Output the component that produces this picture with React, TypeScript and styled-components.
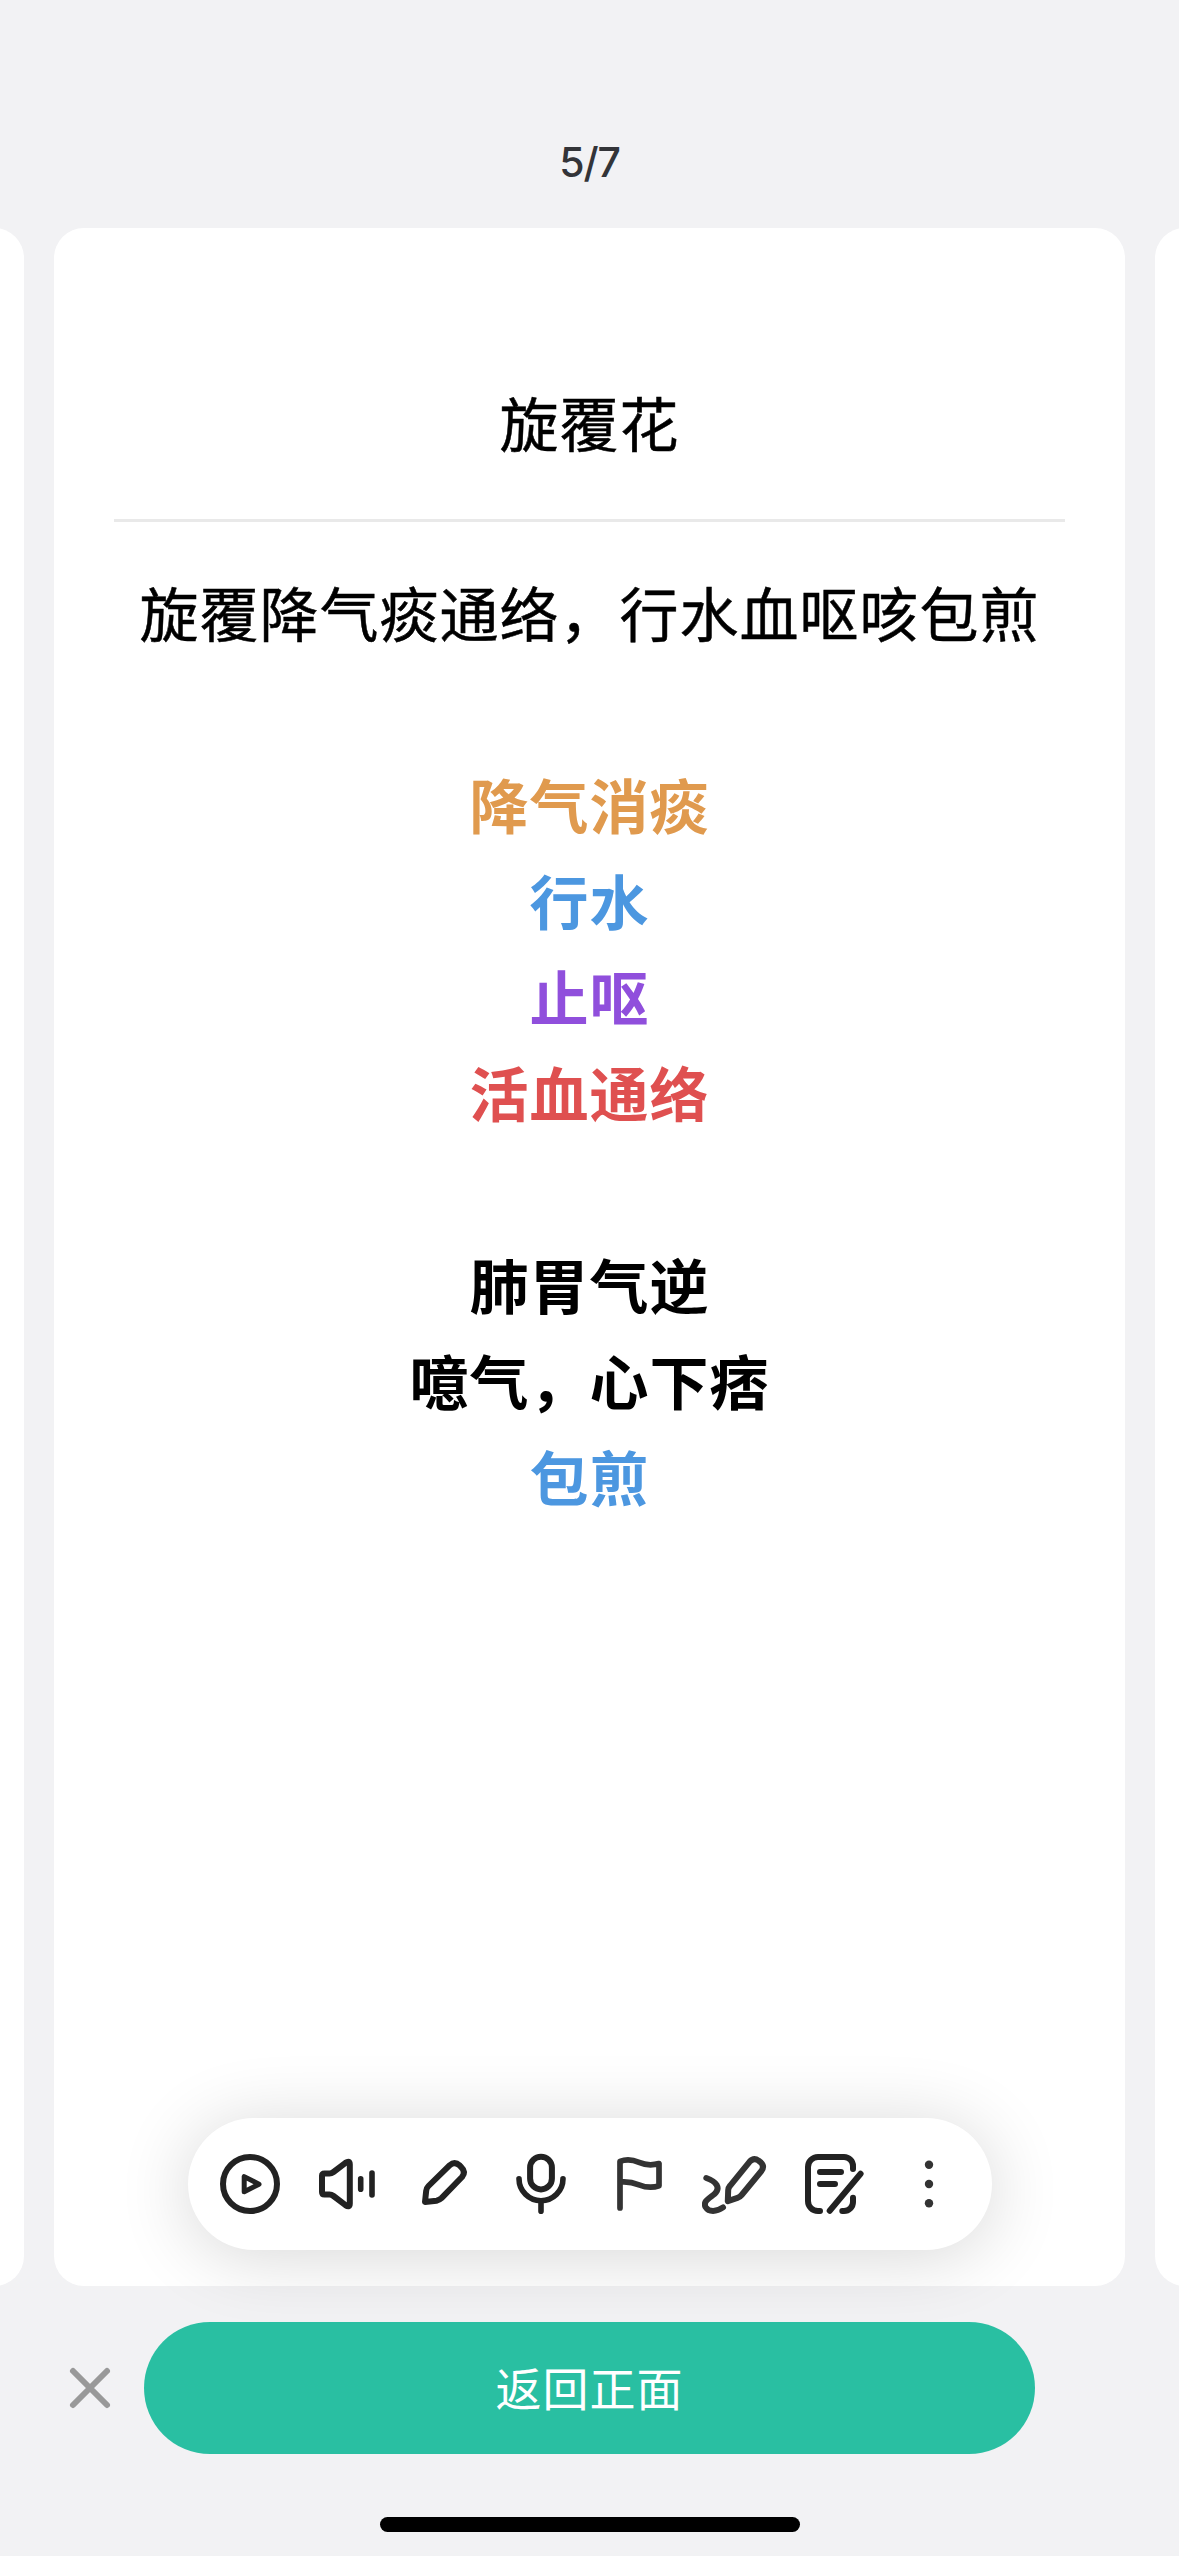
import React from 'react';
import styled, { createGlobalStyle } from 'styled-components';

const GlobalStyle = createGlobalStyle`
  * { box-sizing: border-box; }
  html, body { margin: 0; padding: 0; background: #f2f2f4; overflow: hidden; }
  button { font: inherit; border: 0; padding: 0; background: none; color: inherit; }
`;

const Screen = styled.div`
  width: 1179px;
  height: 2556px;
  display: flex;
  flex-direction: column;
  align-items: center;
  overflow: hidden;
  background: #f2f2f4;
  font-family: Inter, "Noto Sans CJK SC", sans-serif;
`;

const Header = styled.header`
  width: 100%;
  height: 228px;
  padding-top: 137px;
  text-align: center;
  font-size: 41px;
  line-height: 50px;
  font-weight: 500;
  letter-spacing: -1.2px;
  color: #333438;
`;

const Carousel = styled.main`
  width: 100%;
  height: 2058px;
  display: flex;
  justify-content: center;
  gap: 30px;
`;

const Card = styled.section`
  position: relative;
  flex: 0 0 1071px;
  height: 100%;
  padding: 146px 60px 0;
  border-radius: 30px;
  background: #fff;
  color: #000;
  font-family: "Noto Sans CJK SC", sans-serif;
  font-size: 59px;
  letter-spacing: 1px;
  line-height: 96px;
  text-align: center;
`;

const Title = styled.h1`
  margin: 0;
  padding-bottom: 49px;
  border-bottom: 3px solid #e9e9e9;
  font: inherit;
  -webkit-text-stroke: 0.5px currentColor;
`;

const Notes = styled.div`
  padding-top: 42px;
`;

const Line = styled.p<{ $color?: string; $strong?: boolean }>`
  margin: 0;
  height: 96px;
  white-space: nowrap;
  color: ${(p) => p.$color ?? '#000'};
  font-weight: ${(p) => (p.$strong ? 700 : 400)};
  -webkit-text-stroke: ${(p) => (p.$strong ? '0' : '0.5px currentColor')};
`;

const Toolbar = styled.nav`
  position: absolute;
  left: 134px;
  bottom: 36px;
  width: 804px;
  height: 132px;
  padding: 0 15px 0 14px;
  display: flex;
  align-items: center;
  border-radius: 66px;
  background: #fff;
  box-shadow: 0 6px 72px rgba(0, 0, 0, 0.16);
`;

const Tool = styled.button`
  flex: 1;
  display: flex;
  justify-content: center;
`;

const Icon = styled.svg<{ $color?: string }>`
  display: block;
  flex: none;
  width: 66px;
  height: 66px;
  fill: none;
  stroke: ${(p) => p.$color ?? '#222'};
  stroke-width: 6;
  stroke-linecap: round;
  stroke-linejoin: round;
`;

const Footer = styled.footer`
  width: 100%;
  padding: 36px 144px 0 60px;
  display: flex;
  align-items: center;
  gap: 24px;
`;

const Close = styled.button`
  width: 60px;
  display: flex;
  justify-content: center;
`;

const FlipButton = styled.button`
  && {
    flex: 1;
    height: 132px;
    padding-bottom: 3px;
    border-radius: 66px;
    background: #29bfa2;
    color: #fff;
    font-family: "Noto Sans CJK SC", sans-serif;
    font-size: 46px;
    letter-spacing: 1px;
    line-height: 129px;
    text-align: center;
  }
`;

const HomeIndicator = styled.div`
  width: 420px;
  height: 15px;
  margin-top: 63px;
  border-radius: 8px;
  background: #000;
`;

const lines: { text: string; color?: string; strong?: boolean }[] = [
  { text: '旋覆降气痰通络，行水血呕咳包煎' },
  { text: '' },
  { text: '降气消痰', color: '#e09a4e', strong: true },
  { text: '行水', color: '#4c97e0', strong: true },
  { text: '止呕', color: '#904fdc', strong: true },
  { text: '活血通络', color: '#df5050', strong: true },
  { text: '' },
  { text: '肺胃气逆', strong: true },
  { text: '噫气，心下痞', strong: true },
  { text: '包煎', color: '#4c97e0', strong: true },
];

const tools: { name: string; color?: string; art: React.ReactNode }[] = [
  {
    name: '播放',
    art: (
      <>
        <circle r="27" />
        <path d="M-5.8 -7.4V7.8L9 .2Z" strokeWidth="5" />
      </>
    ),
  },
  {
    name: '朗读',
    art: (
      <>
        <path d="M-25 -8Q-25 -10.5 -22.5 -10.5H-17.5Q-15.5 -10.5 -13.5 -12L-1.5 -21.2Q2.8 -24.2 2.8 -19.5V19.5Q2.8 24.2 -1.5 21.2L-13.5 12Q-15.5 10.5 -17.5 10.5H-22.5Q-25 10.5 -25 8Z" />
        <path d="M13.7 -5.3V5.3M25 -11V11" strokeWidth="5.6" />
      </>
    ),
  },
  {
    name: '编辑',
    art: (
      <path d="M-19 18L-17.8 6.8Q-17.5 4 -15.5 2L5.8 -18.8Q10.7 -23 15.8 -18.4L17 -17.2Q22.2 -12.2 18 -7L-2.5 14.2Q-4.6 16.2 -7.5 16.7Z" />
    ),
  },
  {
    name: '录音',
    art: (
      <>
        <rect x="-10.9" y="-27.3" width="21.8" height="32.7" rx="10.9" />
        <path d="M-22 -5.3A22 22 0 0 0 22 -5.3M0 17V27.3" strokeWidth="5.6" />
      </>
    ),
  },
  {
    name: '标记',
    color: '#333',
    art: (
      <path d="M-18 24V-22.6C-11.5 -25 -5 -24.2 1 -21.6S13 -18.2 21 -20.4V1.8C14 4.2 7 3.2 1 .8S-10.5 -2.6 -17.5 -2" strokeWidth="5.7" />
    ),
  },
  {
    name: '手写',
    color: '#333',
    art: (
      <>
        <path d="M-28.7 -6C-18.5 -2.5 -14 4 -20.5 10C-26 14.5 -32.5 17.5 -29.3 23.2C-26.2 28.3 -18.5 28 -12 23.4" />
        <path d="M-7.2 17.2L-6.8 6.2Q-6.7 3.8 -5 1.8L14.5 -22.2Q18.7 -26.8 23.6 -23.4L25.4 -21.9Q30 -17.8 26.4 -13L6.6 11Q4.9 13 2.5 13.8Z" />
      </>
    ),
  },
  {
    name: '笔记',
    art: (
      <path d="M21 -15V-18A9 9 0 0 0 12 -27H-14A10 10 0 0 0 -24 -17V17A10 10 0 0 0 -14 27H-12M10.3 27H12A9 9 0 0 0 21 18V13.7M28.6 -10.2L-2.3 26.7M-12 -12H9M-12 0H3" />
    ),
  },
  {
    name: '更多',
    color: 'none',
    art: (
      <g fill="#333">
        <circle cy="-19.3" r="4.2" />
        <circle r="4.2" />
        <circle cy="19.2" r="4.2" />
      </g>
    ),
  },
];

export default function App() {
  return (
    <>
      <GlobalStyle />
      <Screen>
        <Header>5/7</Header>
        <Carousel>
          <Card />
          <Card>
            <Title>旋覆花</Title>
            <Notes>
              {lines.map((l, i) => (
                <Line key={i} $color={l.color} $strong={l.strong}>
                  {l.text}
                </Line>
              ))}
            </Notes>
            <Toolbar>
              {tools.map((t) => (
                <Tool key={t.name} aria-label={t.name}>
                  <Icon viewBox="-33 -33 66 66" $color={t.color}>
                    {t.art}
                  </Icon>
                </Tool>
              ))}
            </Toolbar>
          </Card>
          <Card />
        </Carousel>
        <Footer>
          <Close aria-label="关闭">
            <Icon viewBox="-33 -33 66 66" $color="#999">
              <path d="M-17 -17L17 17M17 -17L-17 17" />
            </Icon>
          </Close>
          <FlipButton>返回正面</FlipButton>
        </Footer>
        <HomeIndicator />
      </Screen>
    </>
  );
}
